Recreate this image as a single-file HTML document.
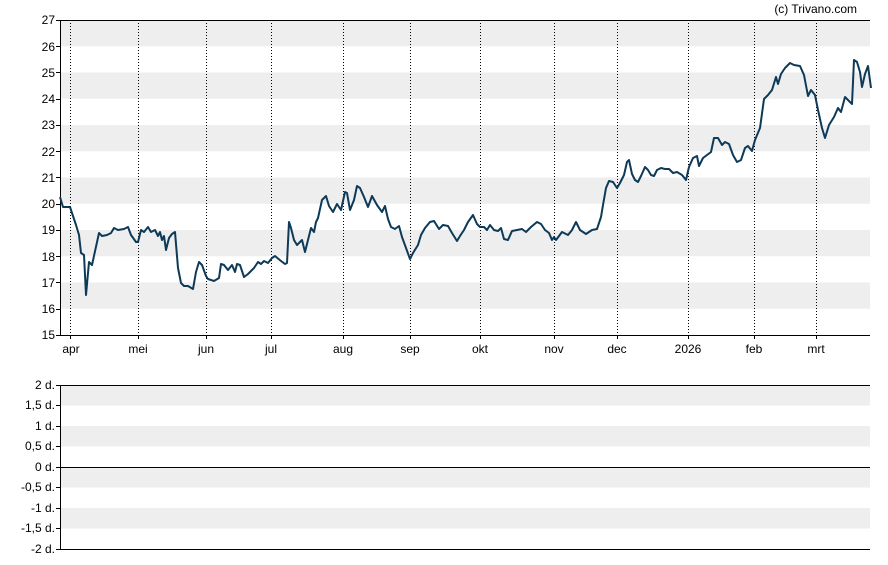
<!DOCTYPE html>
<html><head><meta charset="utf-8"><style>
html,body{margin:0;padding:0;background:#fff;width:888px;height:565px;overflow:hidden}
svg text{font-family:"Liberation Sans",sans-serif;font-size:12px;fill:#000}
</style></head><body>
<svg width="888" height="565" viewBox="0 0 888 565" xmlns="http://www.w3.org/2000/svg">
<!-- top bands -->
<g fill="#eeeeee">
<rect x="61" y="20" width="809" height="26.25"/>
<rect x="61" y="72.5" width="809" height="26.25"/>
<rect x="61" y="125" width="809" height="26.25"/>
<rect x="61" y="177.5" width="809" height="26.25"/>
<rect x="61" y="230" width="809" height="26.25"/>
<rect x="61" y="282.5" width="809" height="26.25"/>
<rect x="61" y="385" width="809" height="20.5"/>
<rect x="61" y="426" width="809" height="20.5"/>
<rect x="61" y="467" width="809" height="20.5"/>
<rect x="61" y="508" width="809" height="20.5"/>
</g>
<text x="857" y="13" text-anchor="end" font-size="12">(c) Trivano.com</text>
<g stroke="#000" stroke-width="1" stroke-dasharray="1,2">
<line x1="70.5" y1="20" x2="70.5" y2="335"/><line x1="138.5" y1="20" x2="138.5" y2="335"/>
<line x1="206.5" y1="20" x2="206.5" y2="335"/><line x1="271.5" y1="20" x2="271.5" y2="335"/>
<line x1="343.5" y1="20" x2="343.5" y2="335"/><line x1="410.5" y1="20" x2="410.5" y2="335"/>
<line x1="480.5" y1="20" x2="480.5" y2="335"/><line x1="554.5" y1="20" x2="554.5" y2="335"/>
<line x1="617.5" y1="20" x2="617.5" y2="335"/><line x1="688.5" y1="20" x2="688.5" y2="335"/>
<line x1="754.5" y1="20" x2="754.5" y2="335"/><line x1="816.5" y1="20" x2="816.5" y2="335"/>
</g>
<g stroke="#000" stroke-width="1" fill="none">
<path d="M870 20.5H60.5V335.5H870"/>
<path d="M870 385.5H60.5V549.5H870"/>
<line x1="60" y1="467.5" x2="870" y2="467.5"/>
<path d="M56 20.5h4M56 46.5h4M56 72.5h4M56 99.5h4M56 125.5h4M56 151.5h4M56 177.5h4M56 204.5h4M56 230.5h4M56 256.5h4M56 282.5h4M56 309.5h4M56 335.5h4"/>
<path d="M56 385.5h4M56 405.5h4M56 426.5h4M56 446.5h4M56 467.5h4M56 487.5h4M56 508.5h4M56 528.5h4M56 549.5h4"/>
<path d="M70.5 335v4M138.5 335v4M206.5 335v4M271.5 335v4M343.5 335v4M410.5 335v4M480.5 335v4M554.5 335v4M617.5 335v4M688.5 335v4M754.5 335v4M816.5 335v4"/>
</g>
<g text-anchor="end">
<text x="55" y="24">27</text><text x="55" y="51">26</text><text x="55" y="77">25</text><text x="55" y="103">24</text>
<text x="55" y="129">23</text><text x="55" y="156">22</text><text x="55" y="182">21</text><text x="55" y="208">20</text>
<text x="55" y="234">19</text><text x="55" y="261">18</text><text x="55" y="287">17</text><text x="55" y="313">16</text><text x="55" y="339">15</text>
<text x="55" y="389" font-size="11">2 d.</text><text x="55" y="409" font-size="11">1,5 d.</text><text x="55" y="430" font-size="11">1 d.</text>
<text x="55" y="450" font-size="11">0,5 d.</text><text x="55" y="471" font-size="11">0 d.</text><text x="55" y="491" font-size="11">-0,5 d.</text>
<text x="55" y="512" font-size="11">-1 d.</text><text x="55" y="532" font-size="11">-1,5 d.</text><text x="55" y="553" font-size="11">-2 d.</text>
</g>
<g text-anchor="middle">
<text x="71" y="353">apr</text><text x="138" y="353">mei</text><text x="206" y="353">jun</text><text x="271" y="353">jul</text>
<text x="343" y="353">aug</text><text x="410" y="353">sep</text><text x="480" y="353">okt</text><text x="554" y="353">nov</text>
<text x="617" y="353">dec</text><text x="688" y="353">2026</text><text x="754" y="353">feb</text><text x="816" y="353">mrt</text>
</g>
<polyline fill="none" stroke="#0d3a58" stroke-width="2" stroke-linejoin="round" points="60,197 63,207 70,207 76,225 79,235 81,253 84,255 86,295 89,262 92,265 99,233 102,236 107,235 111,233 114,228 118,230 124,229 128,227 131,235 136,242 138,242 141,230 144,232 148,227 151,232 155,230 158,236 160,232 162,240 164,236 166,250 169,238 172,234 175,232 178,268 181,283 184,286 188,286 193,289 196,272 199,262 202,265 206,276 208,279 214,281 219,278 221,264 224,265 228,270 232,265 235,272 237,264 240,265 244,277 248,274 254,268 258,262 261,264 264,261 268,263 272,258 275,256 281,261 285,264 287,263 289,222 291,228 294,240 297,245 302,240 305,252 308,240 311,228 314,232 316,222 318,218 322,200 326,196 329,206 333,212 337,204 341,210 345,192 347,193 350,210 354,200 357,186 360,188 364,197 368,207 372,196 377,205 382,212 385,206 388,219 391,227 395,229 399,226 402,237 406,248 410,259 413,253 418,245 421,235 425,228 430,222 434,221 439,229 443,225 448,226 452,233 457,241 460,236 464,230 468,222 473,215 477,224 480,227 484,227 487,230 490,225 494,230 498,231 501,228 504,239 508,240 512,231 517,230 522,229 526,232 531,227 537,222 541,224 545,230 549,233 552,240 554,237 556,240 562,232 568,235 572,230 576,222 580,230 586,234 592,230 597,229 601,217 603,205 606,188 609,181 613,182 617,188 620,183 624,175 627,162 629,160 632,174 635,180 638,182 641,176 645,167 648,170 651,175 654,176 657,170 661,168 665,169 669,169 673,173 677,172 682,175 686,180 689,167 693,158 697,156 699,166 703,158 707,155 711,152 714,138 718,138 722,145 725,142 729,144 733,155 737,162 741,160 745,148 748,146 752,151 755,140 760,128 764,99 768,95 772,90 776,77 778,84 781,74 785,68 790,63 794,65 800,66 804,75 808,96 811,90 815,95 818,110 822,128 825,138 829,125 834,117 838,108 841,112 845,97 848,100 852,104 854,60 857,62 860,72 862,87 865,74 868,66 871,88"/>
</svg>
</body></html>
